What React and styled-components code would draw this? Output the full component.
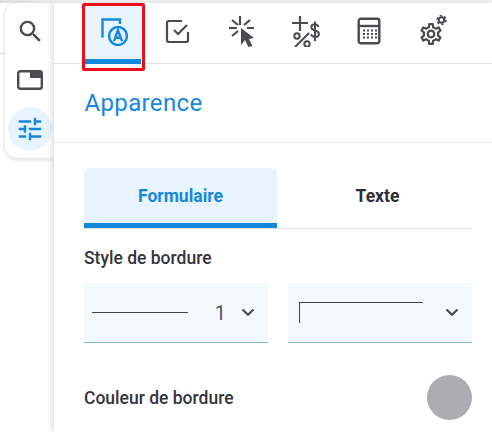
import React from "react"
import styled, { createGlobalStyle } from "styled-components"

const Global = createGlobalStyle`
  html, body {
    margin: 0;
    padding: 0;
    background: #fff;
  }

  body {
    font-family: Roboto, "Liberation Sans", sans-serif;
    color: #2f2d35;
  }
`

const Ink = "#4a4a4f"
const Blue = "#1488dc"

const SearchIcon = () => (
  <svg width="29" height="29" viewBox="0 0 24 24" fill={Ink}>
    <path d="M15.5 14h-.79l-.28-.27A6.47 6.47 0 0 0 16 9.5 6.5 6.5 0 1 0 9.5 16c1.61 0 3.09-.59 4.23-1.57l.27.28v.79l5 4.99L20.49 19l-4.99-5zm-6 0C7.01 14 5 11.99 5 9.5S7.01 5 9.5 5 14 7.01 14 9.5 11.99 14 9.5 14z" />
  </svg>
)

const WindowIcon = () => (
  <svg width="26" height="20" viewBox="0 0 26 20">
    <rect x="1.2" y="1.2" width="23.6" height="17.6" rx="2" fill="none" stroke={Ink} strokeWidth="2.4" />
    <rect x="13" y="1" width="12" height="7" fill={Ink} />
  </svg>
)

const TuneIcon = () => (
  <svg width="30" height="30" viewBox="0 0 24 24" fill={Blue}>
    <path d="M3 17v2h6v-2H3zM3 5v2h10V5H3zm10 16v-2h8v-2h-8v-2h-2v6h2zM7 9v2H3v2h4v2h2V9H7zm14 4v-2H11v2h10zm-6-4h2V7h4V5h-4V3h-2v6z" />
  </svg>
)

const AppearanceIcon = () => (
  <svg width="30" height="30" viewBox="0 0 30 30" fill="none" stroke={Blue}>
    <path d="M22 8V3.500H4.500V21.500" strokeWidth="2.400" />
    <circle cx="20" cy="20" r="8.900" strokeWidth="2.500" />
    <path d="M16 25.200 20 14.200l4 11M17.300 21.800h5.400" strokeWidth="2.400" />
  </svg>
)

const CheckIcon = () => (
  <svg width="28" height="28" viewBox="0 0 28 28" fill="none" stroke={Ink} strokeWidth="2.200">
    <path d="M19 4H6a2 2 0 0 0-2 2v17a2 2 0 0 0 2 2h17a2 2 0 0 0 2-2v-8" />
    <path d="m11 13 4 4 9-9" />
  </svg>
)

const ClickIcon = () => (
  <svg width="30" height="32" viewBox="0 0 30 32" fill="none" stroke={Ink} strokeWidth="2.200">
    <path d="M14 1v9M3 13h8M21 13h7M6 5l6 5M24 5l-6 5M6 21l6-5" />
    <path d="m15 13 13 10-5 1 3.500 7-4 1-3.500-7-4 5z" fill={Ink} stroke="none" />
  </svg>
)

const PricingIcon = () => (
  <svg width="30" height="32" viewBox="0 0 30 32" fill="none" stroke={Ink} strokeWidth="2.200">
    <path d="M2 8h16M10 1v15" />
    <circle cx="7" cy="21" r="2.700" strokeWidth="2" />
    <circle cx="17" cy="29" r="2.700" strokeWidth="2" />
    <path d="M19 18 5 32" strokeWidth="2" />
    <path d="M28.500 12c-.5-1.800-1.800-2.800-3.600-2.800-2.100 0-3.600 1.200-3.600 3 0 4.400 7.600 2.200 7.600 6.800 0 1.800-1.600 3-3.800 3-2 0-3.400-1-4-2.800M25 6.500V26" strokeWidth="2" />
  </svg>
)

const CalculatorIcon = () => (
  <svg width="24" height="28" viewBox="0 0 24 28" fill="none" stroke={Ink} strokeWidth="2.400">
    <rect x="1.700" y="1.700" width="20.600" height="24.600" rx="2.200" />
    <path d="M2 9h20" />
    <g fill={Ink} stroke="none">
      {[7, 11, 15, 19].map((x) =>
        [13.500, 17, 20.500].map((y) => <rect key={`${x}-${y}`} x={x - 1} y={y - 1} width="2" height="2" />)
      )}
    </g>
  </svg>
)

const GearIcon = () => (
  <svg width="28" height="32" viewBox="0 0 28 32">
    <g transform="translate(-1.200 5.800) scale(1.100)" fill={Ink}>
      <path d="M19.430 12.980c.04-.32.07-.64.07-.98 0-.34-.03-.66-.07-.98l2.110-1.650c.19-.15.24-.42.12-.64l-2-3.460c-.09-.16-.26-.25-.44-.25-.06 0-.12.01-.17.03l-2.490 1c-.52-.4-1.080-.73-1.690-.98l-.38-2.650C14.460 2.180 14.250 2 14 2h-4c-.25 0-.46.18-.49.42l-.38 2.650c-.61.25-1.170.59-1.690.98l-2.490-1c-.06-.02-.12-.03-.18-.03-.17 0-.34.09-.43.25l-2 3.460c-.13.22-.07.49.12.64l2.110 1.650c-.04.32-.07.65-.07.98 0 .33.03.66.07.98l-2.110 1.650c-.19.15-.24.42-.12.64l2 3.460c.09.16.26.25.44.25.06 0 .12-.01.17-.03l2.490-1c.52.4 1.080.73 1.690.98l.38 2.650c.03.24.24.42.49.42h4c.25 0 .46-.18.49-.42l.38-2.650c.61-.25 1.170-.59 1.690-.98l2.490 1c.06.02.12.03.18.03.17 0 .34-.09.43-.25l2-3.460c.12-.22.07-.49-.12-.64l-2.110-1.650zm-1.980-1.710c.04.31.05.52.05.73 0 .21-.02.43-.05.73l-.14 1.130.89.7 1.080.84-.7 1.210-1.270-.51-1.040-.42-.9.68c-.43.32-.84.56-1.250.73l-1.060.43-.16 1.130-.2 1.350h-1.400l-.19-1.350-.16-1.130-1.060-.43c-.43-.18-.83-.41-1.230-.71l-.91-.7-1.060.43-1.270.51-.7-1.210 1.080-.84.89-.7-.14-1.130c-.03-.31-.05-.54-.05-.74s.02-.43.05-.73l.14-1.130-.89-.7-1.080-.84.7-1.210 1.270.51 1.040.42.9-.68c.43-.32.84-.56 1.250-.73l1.060-.43.16-1.130.2-1.350h1.390l.19 1.350.16 1.130 1.060.43c.43.18.83.41 1.230.71l.91.7 1.060-.43 1.270-.51.7 1.210-1.070.85-.89.7.14 1.130zM12 8c-2.210 0-4 1.790-4 4s1.790 4 4 4 4-1.790 4-4-1.790-4-4-4zm0 6c-1.100 0-2-.9-2-2s.9-2 2-2 2 .9 2 2-.9 2-2 2z" />
    </g>
    <circle cx="22.500" cy="5" r="2.800" fill="none" stroke={Ink} strokeWidth="2" />
    <circle cx="22.500" cy="5" r="4.400" fill="none" stroke={Ink} strokeWidth="1.600" strokeDasharray="2.300 2.300" />
  </svg>
)

const Chevron = () => (
  <svg width="14" height="9" viewBox="0 0 14 9" fill="none" stroke={Ink} strokeWidth="2.200">
    <path d="m1.500 1.500 5.500 5.200 5.500-5.200" />
  </svg>
)

const tools = [
  { id: "appearance", icon: <AppearanceIcon />, active: true },
  { id: "check", icon: <CheckIcon /> },
  { id: "click", icon: <ClickIcon /> },
  { id: "pricing", icon: <PricingIcon /> },
  { id: "calculator", icon: <CalculatorIcon /> },
  { id: "settings", icon: <GearIcon /> },
]

export default function App() {
  return (
    <Page>
      <Global />
      <Rail>
        <RailButton><SearchIcon /></RailButton>
        <RailButton><WindowIcon /></RailButton>
        <RailButton $active><TuneIcon /></RailButton>
      </Rail>

      <Panel>
        <Toolbar>
          {tools.map((tool) => (
            <Tool key={tool.id} $active={tool.active}>
              {tool.icon}
              {tool.active && <Highlight />}
            </Tool>
          ))}
        </Toolbar>

        <Heading>Apparence</Heading>

        <Content>
          <Tabs>
            <Tab $active>Formulaire</Tab>
            <Tab>Texte</Tab>
          </Tabs>

          <FieldLabel>Style de bordure</FieldLabel>
          <Selects>
            <Select>
              <WidthLine />
              <SelectValue>1</SelectValue>
              <Chevron />
            </Select>
            <Select>
              <CornerLine />
              <Chevron />
            </Select>
          </Selects>

          <ColorRow>
            <FieldLabel as="span">Couleur de bordure</FieldLabel>
            <Swatch />
          </ColorRow>
        </Content>
      </Panel>
    </Page>
  )
}

const Page = styled.div`
  display: flex;
  align-items: flex-start;
  width: 492px;
  height: 432px;
  padding: 3px 0 0 5px;
  box-sizing: border-box;
  overflow: hidden;
  background:
    linear-gradient(#dcdcde, #dcdcde) 0 53px / 5px 1px no-repeat,
    linear-gradient(90deg, #dedee0, #f3f3f4 60px) 0 0 / 100% 3px no-repeat,
    #fff;
`

const Rail = styled.div`
  display: flex;
  flex-direction: column;
  align-items: center;
  gap: 5px;
  flex: none;
  width: 49px;
  height: 155px;
  padding: 6px 0 0 1px;
  box-sizing: border-box;
  background: #fff;
  border-radius: 12px 0 0 12px;
  box-shadow: 0 1px 4px rgba(0, 0, 0, 0.18);
`

const RailButton = styled.div`
  display: flex;
  align-items: center;
  justify-content: center;
  flex: none;
  width: 44px;
  height: 44px;
  border-radius: 50%;
  background: ${(p) => (p.$active ? "#e8f4fd" : "transparent")};
`

const Panel = styled.div`
  position: relative;
  flex: 1;
  height: 429px;
  background: #fff;
  box-shadow: -2px 0 5px rgba(0, 0, 0, 0.14);
`

const Toolbar = styled.div`
  display: flex;
  gap: 8px;
  height: 61px;
  padding-left: 31px;
  box-sizing: border-box;
  border-bottom: 1px solid #e4e4e6;
`

const Tool = styled.div`
  position: relative;
  display: flex;
  align-items: center;
  justify-content: center;
  flex: none;
  width: 56px;
  height: 61px;
  box-sizing: border-box;
  padding-bottom: ${(p) => (p.$active ? "0" : "5px")};
  background: ${(p) => (p.$active ? "#e8f4fd" : "transparent")};
  border-bottom: ${(p) => (p.$active ? `5px solid ${Blue}` : "none")};
`

const Highlight = styled.div`
  position: absolute;
  top: 0;
  left: -3px;
  width: 63px;
  height: 68px;
  box-sizing: border-box;
  border: 3px solid #ee0d19;
  border-radius: 2px;
`

const Heading = styled.h1`
  height: 79px;
  margin: 0;
  padding: 24px 0 0 30.5px;
  box-sizing: border-box;
  font-size: 24px;
  font-weight: 400;
  line-height: 30px;
  letter-spacing: 0.35px;
  color: ${Blue};
  border-bottom: 1px solid #e8e8ea;
`

const Content = styled.div`
  padding: 25px 20px 0 30px;
`

const Tabs = styled.div`
  display: flex;
  height: 60px;
  box-sizing: content-box;
  border-bottom: 1px solid #e2e2e6;
`

const Tab = styled.div`
  flex: ${(p) => (p.$active ? "0 0 193px" : "1")};
  display: flex;
  align-items: center;
  justify-content: center;
  height: ${(p) => (p.$active ? "60px" : "55px")};
  margin-left: ${(p) => (p.$active ? "0" : "6px")};
  box-sizing: border-box;
  font-size: 17.5px;
  font-weight: 700;
  color: ${(p) => (p.$active ? Blue : "#2f2d35")};
  background: ${(p) => (p.$active ? "#e8f4fd" : "transparent")};
  border-radius: 6px 6px 0 0;
  border-bottom: ${(p) => (p.$active ? `5px solid ${Blue}` : "none")};
`

const FieldLabel = styled.div`
  margin-top: 19px;
  font-size: 17.5px;
  font-weight: 500;
  line-height: 20px;
  color: #36343b;
`

const Selects = styled.div`
  display: grid;
  grid-template-columns: 184px 184px;
  gap: 20px;
  margin-top: 15px;
`

const Select = styled.div`
  display: flex;
  align-items: center;
  justify-content: space-between;
  height: 60px;
  padding: 0 13px 0 8px;
  box-sizing: border-box;
  background: #f4f9fd;
  border-bottom: 1px solid #7fb5d3;
`

const WidthLine = styled.div`
  width: 96px;
  height: 1px;
  background: #3f4246;
`

const SelectValue = styled.span`
  margin-left: auto;
  margin-right: 15px;
  font-size: 20px;
  color: #55565b;
`

const CornerLine = styled.div`
  width: 123px;
  height: 20px;
  margin: -1px 0 0 3px;
  border-top: 1px solid #3f4246;
  border-left: 1px solid #3f4246;
`

const ColorRow = styled.div`
  display: flex;
  align-items: center;
  justify-content: space-between;
  margin-top: 32px;

  span {
    margin: 0;
  }
`

const Swatch = styled.div`
  width: 45px;
  height: 45px;
  border-radius: 50%;
  background: #acacb1;
`
